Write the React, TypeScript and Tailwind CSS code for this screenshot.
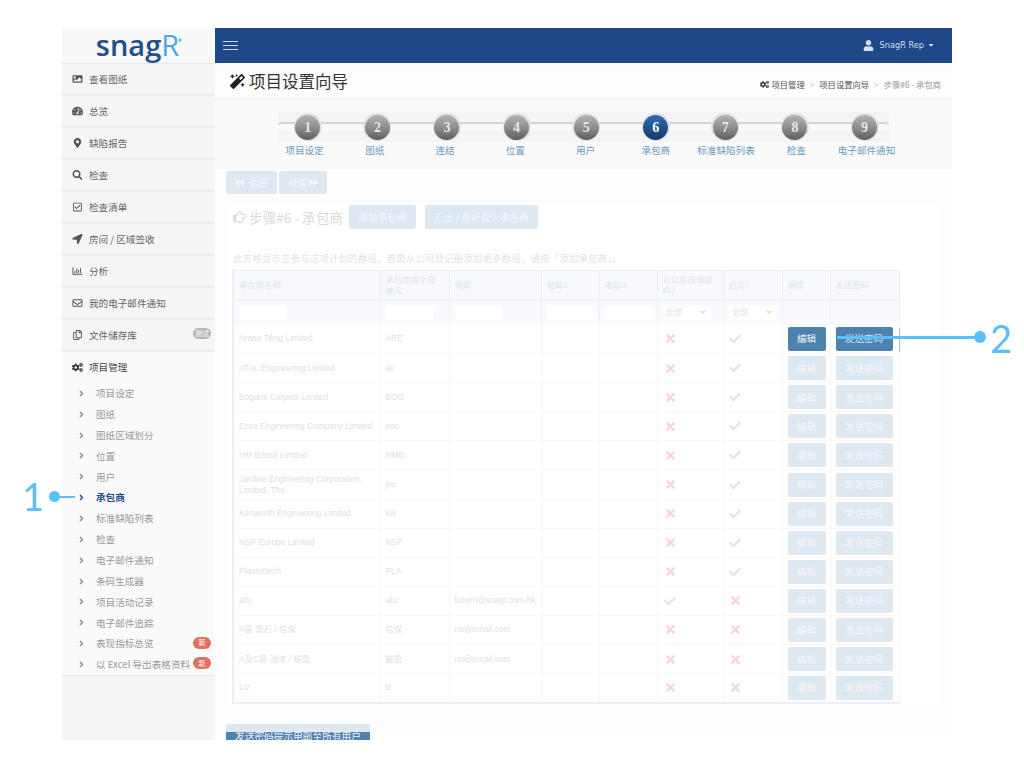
import React from "react";
import {
  FaImage, FaTachometerAlt, FaMapMarkerAlt, FaSearch, FaRegCheckSquare, FaLocationArrow,
  FaRegChartBar, FaRegEnvelope, FaRegCopy, FaCogs, FaMagic, FaUser, FaBackward, FaForward,
  FaRegHandPointRight, FaTimes, FaCheck, FaAngleRight, FaCaretDown,
} from "react-icons/fa";

const nav = [
  { icon: FaImage, label: "查看图纸" },
  { icon: FaTachometerAlt, label: "总览" },
  { icon: FaMapMarkerAlt, label: "缺陷报告" },
  { icon: FaSearch, label: "检查" },
  { icon: FaRegCheckSquare, label: "检查清单" },
  { icon: FaLocationArrow, label: "房间 / 区域签收" },
  { icon: FaRegChartBar, label: "分析" },
  { icon: FaRegEnvelope, label: "我的电子邮件通知" },
  { icon: FaRegCopy, label: "文件储存库", badge: "测试" },
];
const sub = [
  { label: "项目设定" }, { label: "图纸" }, { label: "图纸区域划分" }, { label: "位置" }, { label: "用户" },
  { label: "承包商", active: true }, { label: "标准缺陷列表" }, { label: "检查" }, { label: "电子邮件通知" },
  { label: "条码生成器" }, { label: "项目活动记录" }, { label: "电子邮件追踪" },
  { label: "表现指标总览", isNew: true }, { label: "以 Excel 导出表格资料", isNew: true },
];
const steps = ["项目设定", "图纸", "连结", "位置", "用户", "承包商", "标准缺陷列表", "检查", "电子邮件通知"];
const rows: [string, string, string, boolean, boolean][] = [
  ["Arena Tiling Limited", "ARE", "", false, true],
  ["ATAL Engineering Limited", "ae", "", false, true],
  ["Bogans Carpets Limited", "BOG", "", false, true],
  ["Ecco Engineering Company Limited", "eec", "", false, true],
  ["HM Bristol Limited", "HMB", "", false, true],
  ["Jardine Engineering Corporation, Limited, The", "jec", "", false, true],
  ["Kenworth Engineering Limited", "kel", "", false, true],
  ["NSP Europe Limited", "NSP", "", false, true],
  ["Plastertech", "PLA", "", false, true],
  ["abc", "abc", "luzern@snagr.com.hk", true, false],
  ["A區 雲石 / 信保", "信保", "no@email.com", false, false],
  ["A及C區 油漆 / 駿盈", "駿盈", "no@email.com", false, false],
  ["Liz", "lz", "", false, false],
];
const heads = [
  ["承包商名称", "w-[147px]"], ["承包商首字母缩写", "w-[69px]"], ["电邮", "w-[92px]"], ["电邮2", "w-[58px]"], ["电邮3", "w-[58px]"],
  ["可以寄送电邮吗？", "w-[66px]"], ["启用？", "w-[59px]"], ["编辑", "w-[48px]"], ["发送密码", "w-[69px]"],
];

function Bool({ v }: { v: boolean }) {
  return v ? <FaCheck className="text-[12px] text-[#dcecdc]" /> : <FaTimes className="text-[13px] text-[#f9d6d6]" />;
}

export default function App() {
  return (
    <div className="relative h-[768px] w-[1024px] overflow-hidden bg-white font-['Liberation_Sans','Noto_Sans_CJK_SC',sans-serif]">
      <div className="ml-[62px] pt-[28px]">
        <div className="flex h-[712px] w-[890px] overflow-hidden bg-[#fcfcfc]">
          {/* Sidebar */}
          <aside className="flex w-[153px] shrink-0 flex-col bg-[#f5f5f5] font-['Noto_Sans_CJK_SC','Liberation_Sans',sans-serif]">
            <div className="flex h-[36px] items-start justify-center border-b border-[#e6e6e6] bg-[#f8f8f8] pl-[1px] font-['Open_Sans',sans-serif] text-[29px] font-semibold leading-[34px] text-[#22508f]">
              <span>snag</span>
              <span className="font-normal text-[#4aa9de]">R</span>
              <span className="mt-[10px] h-0 w-0 border-y-[2px] border-l-[3px] border-y-transparent border-l-[#4aa9de]" />
            </div>
            {nav.map((n) => (
              <div key={n.label} className="flex h-[32px] items-center border-b-2 border-[#ececec] pl-[10px] text-[9.6px] text-[#666]">
                <n.icon className="w-[11px] text-[10px] text-[#555]" />
                <span className="ml-[6px]">{n.label}</span>
                {n.badge && <span className="ml-auto mr-[4px] mt-[-3px] flex h-[11px] w-[18px] items-center justify-center rounded-full bg-[#b5b5b5] text-[7px] text-white">{n.badge}</span>}
              </div>
            ))}
            <div className="flex h-[31px] items-center bg-[#fafafa] pb-[1px] pl-[10px] text-[9.6px] text-[#444]">
              <FaCogs className="w-[11px] text-[11px] text-[#333]" />
              <span className="ml-[6px]">项目管理</span>
            </div>
            <div className="border-b border-[#e6e6e6] bg-[#fafafa]">
              {sub.map((s) => (
                <div key={s.label} className={`flex h-[20.85px] items-center pl-[17px] text-[9.6px] ${s.active ? "font-bold text-[#22508f]" : "text-[#999]"}`}>
                  <FaAngleRight className={`w-[5px] text-[9px] ${s.active ? "text-[#22508f]" : "text-[#888]"}`} />
                  <span className="ml-[12px]">{s.label}</span>
                  {s.isNew && <span className="ml-auto mr-[4px] mt-[-2px] flex h-[12px] w-[18px] items-center justify-center rounded-full bg-[#e2705f] text-[7px] text-white">新</span>}
                </div>
              ))}
            </div>
          </aside>

          {/* Main */}
          <main className="flex min-w-0 flex-1 flex-col">
            <header className="flex h-[35px] shrink-0 items-center justify-between bg-[#1e4888] pl-[8px] pr-[17px] text-white">
              <div className="flex w-[15px] flex-col gap-[3px]">
                <span className="h-px bg-[#cfd9e8]" /><span className="h-px bg-[#cfd9e8]" /><span className="h-px bg-[#cfd9e8]" />
              </div>
              <div className="flex items-center font-['DejaVu_Sans',sans-serif] text-[8.2px] text-[#d5deea]">
                <FaUser className="mr-[6px] text-[11px]" />
                SnagR Rep
                <FaCaretDown className="ml-[3px] text-[8px]" />
              </div>
            </header>
            <div className="flex h-[37px] shrink-0 items-center justify-between border-b-2 border-[#f0f0f0] bg-[#fdfdfd] pl-[15px] pr-[11px] font-['Noto_Sans_CJK_SC',sans-serif]">
              <div className="mt-[2px] flex items-center text-[16.5px] text-[#333]">
                <FaMagic className="mr-[4px] text-[15px] text-[#222]" />项目设置向导
              </div>
              <div className="mt-[8px] flex items-center text-[8.3px] text-[#555]">
                <FaCogs className="mr-[2px] text-[9px] text-[#333]" />项目管理
                <span className="mx-[5px] text-[#ccc]">&gt;</span>项目设置向导
                <span className="mx-[5px] text-[#ccc]">&gt;</span><span className="text-[#999]">步骤#6 - 承包商</span>
              </div>
            </div>

            {/* Steps */}
            <div className="relative h-[70px] shrink-0 bg-[#fafafa] font-['Noto_Sans_CJK_SC',sans-serif]">
              <div className="absolute left-[63px] top-[12px] h-[30px] w-[611px] bg-[#f4f4f4]" />
              <div className="absolute left-[63px] top-[22px] h-[9px] w-[611px] rounded-full border-t-2 border-[#d4d4d4] bg-[#fafafa]" />
              <div className="relative ml-[58px] flex w-[698px] pt-[13px]">
                {steps.map((s, i) => (
                  <div key={s} className="flex w-[69.6px] shrink-0 justify-center">
                    <div className="rounded-full bg-[#e2e2e2] p-[1.5px]">
                      <div className={`flex h-[25px] w-[25px] items-center justify-center rounded-full font-['Liberation_Serif',serif] text-[14px] font-bold ${i === 5 ? "bg-[linear-gradient(#2f6eb0,#14386c)] text-white" : "bg-[linear-gradient(#b4b4b4,#8a8a8a_55%,#5c5c5c)] text-[#e6e6e6]"}`}>
                        {i + 1}
                      </div>
                    </div>
                  </div>
                ))}
              </div>
              <div className="relative ml-[54.4px] mt-[2px] flex">
                {steps.map((s) => (
                  <div key={s} className="w-[70.25px] shrink-0 whitespace-nowrap text-center text-[9.6px] leading-[14px] text-[#6a9cc4]">{s}</div>
                ))}
              </div>
            </div>

            {/* Content */}
            <div className="flex-1 bg-[#fefefe] pl-[11px] pr-[10px] font-['Noto_Sans_CJK_SC',sans-serif]">
              <div className="flex h-[24px] gap-[2px] pt-px">
                <button className="flex h-[23px] w-[51px] items-center justify-center rounded-[2px] bg-[#dde8f1] text-[9.6px] text-[#f3f6f9]"><FaBackward className="mr-[4px] text-[9px]" />返回</button>
                <button className="flex h-[23px] w-[48px] items-center justify-center rounded-[2px] bg-[#dde8f1] text-[9.6px] text-[#f3f6f9]">继续<FaForward className="ml-[2px] text-[9px]" /></button>
              </div>
              <div className="mt-[6px] h-[510px] rounded-[2px] border border-[#f9f9f9] bg-white pl-[6px]">
                <div className="flex h-[32px] items-center">
                  <FaRegHandPointRight className="text-[14px] text-[#dcdcdc]" />
                  <span className="ml-[2px] text-[13.6px] text-[#dadada]">步骤#6 - 承包商</span>
                  <button className="ml-[6px] flex h-[24px] w-[67px] items-center justify-center rounded-[2px] bg-[#dde8f1] text-[9.6px] text-[#f3f6f9]">添加承包商</button>
                  <button className="ml-[9px] flex h-[24px] w-[113px] items-center justify-center rounded-[2px] bg-[#dde8f1] text-[9.6px] text-[#f3f6f9]">汇出 / 重新载入承包商</button>
                </div>
                <p className="mt-[18px] h-[19px] whitespace-nowrap text-[9.6px] leading-[14px] text-[#e3e3e3]">此方格显示正参与这项计划的群组。若需从公司登记册添加更多群组，请按「添加承包商」。</p>
                <table className="ml-[-1px] w-[666px] table-fixed border-collapse border-b-2 border-l-2 border-[#ecedf5] font-['Liberation_Sans','Noto_Sans_CJK_SC',sans-serif]">
                  <thead>
                    <tr className="h-[30px] bg-[#f7f9fc] text-left text-[8.4px] leading-[11px] text-[#dfe4ee]">
                      {heads.map(([h, w]) => (
                        <th key={h} className={`${w} border border-[#eaeef7] px-[5px] font-normal`}>{h}</th>
                      ))}
                    </tr>
                    <tr className="h-[24px] bg-[#f8fafd]">
                      {[0, 1, 2, 3, 4].map((i) => (
                        <td key={i} className="border-x border-[#eef1f8] px-[5px]">
                          <div className={`h-[14px] bg-white ${i === 4 ? "w-[47px]" : "w-[48px]"}`} />
                        </td>
                      ))}
                      {[0, 1].map((i) => (
                        <td key={i} className="border-x border-[#eef1f8] px-[5px]">
                          <div className="flex h-[14px] w-[48px] items-center justify-between bg-white pl-[3px] pr-[5px] text-[8.4px] text-[#e2e2e2]">全部<span className="h-0 w-0 border-x-[3px] border-t-[3px] border-x-transparent border-t-[#dddddd]" /></div>
                        </td>
                      ))}
                      <td className="border-x border-[#eef1f8]" /><td className="border-x border-[#eef1f8]" />
                    </tr>
                  </thead>
                  <tbody className="text-[8.4px] leading-[11px] text-[#e0e0e0]">
                    {rows.map((r, i) => (
                      <tr key={r[0]} className="h-[29.1px] border-b border-[#f6f7fb]">
                        <td className="border-r border-[#f4f6fa] px-[5px]">{r[0]}</td>
                        <td className="border-r border-[#f4f6fa] px-[5px]">{r[1]}</td>
                        <td className="border-r border-[#f4f6fa] px-[5px] whitespace-nowrap">{r[2]}</td>
                        <td className="border-r border-[#f4f6fa]" /><td className="border-r border-[#f4f6fa]" />
                        <td className="border-r border-[#f4f6fa] pl-[6px]"><Bool v={r[3]} /></td>
                        <td className="border-r border-[#f4f6fa] pl-[5px]"><Bool v={r[4]} /></td>
                        <td className="border-r border-[#f4f6fa] pl-[5px]">
                          <div className={`flex h-[24px] w-[38px] items-center justify-center rounded-[2px] text-[9.6px] ${i === 0 ? "bg-[#4d82b0] text-[#f0f4f8]" : "bg-[#dde8f1] text-[#f3f6f9]"}`}>编辑</div>
                        </td>
                        <td className="relative border-r border-[#f4f6fa] pl-[5px]">
                          <div className={`flex h-[24px] w-[57px] items-center justify-center rounded-[2px] text-[9.6px] ${i === 0 ? "bg-[#4d82b0] text-[#d5e2ed]" : "bg-[#dde8f1] text-[#f3f6f9]"}`}>发送密码</div>
                          {i === 0 && <span className="absolute right-[-1px] top-[3px] h-[24px] w-px bg-[#a8bcd0]" />}
                        </td>
                      </tr>
                    ))}
                  </tbody>
                </table>
              </div>
              <div className="mt-[14px] h-[24px] w-[144px] rounded-[2px] bg-[linear-gradient(#dde8f1_8px,#4d82b0_8px)] text-center text-[9.7px] leading-[24px] text-[#eef3f7]">发送密码提示电邮至所有用户</div>
            </div>
          </main>
        </div>
      </div>

      {/* Callouts */}
      <div className="absolute left-[22px] top-[474px] font-['Lato',sans-serif] text-[38px] leading-[44px] text-[#5ac0fa]">1</div>
      <div className="absolute left-[49px] top-[491px] h-[11px] w-[11px] rounded-full bg-[#5ac0fa]" />
      <div className="absolute left-[55px] top-[496px] h-[2px] w-[20px] bg-[#5ac0fa]" />
      <div className="absolute left-[837px] top-[336px] h-[3px] w-[143px] bg-[#5ac0fa]" />
      <div className="absolute left-[974px] top-[331px] h-[12px] w-[12px] rounded-full bg-[#5ac0fa]" />
      <div className="absolute left-[990px] top-[316px] font-['Lato',sans-serif] text-[38px] leading-[44px] text-[#5ac0fa]">2</div>
    </div>
  );
}
